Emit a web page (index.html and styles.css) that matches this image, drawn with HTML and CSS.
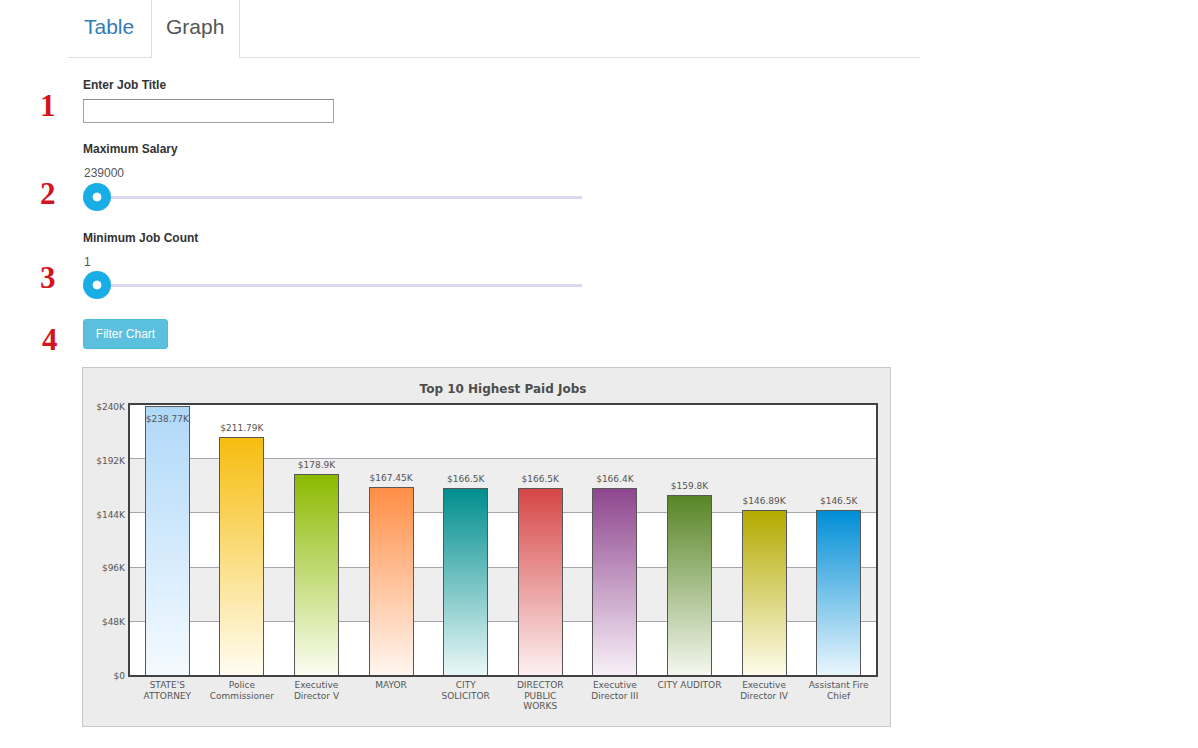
FILE: index.html
```html
<!DOCTYPE html>
<html lang="en">
<head>
<meta charset="utf-8">
<title>Top 10 Highest Paid Jobs</title>
<link rel="stylesheet" href="styles.css">
</head>
<body>
<div class="page">
  <ul class="tabs">
    <li class="tab"><a class="tab-link">Table</a></li>
    <li class="tab active"><a class="tab-link">Graph</a></li>
  </ul>

  <div class="form">
    <div class="field-label lbl-1">Enter Job Title</div>
    <div class="ctl-row row-input">
      <span class="num n1">1</span>
      <input class="text-input" type="text">
    </div>

    <div class="field-label lbl-2">Maximum Salary</div>
    <div class="field-value">239000</div>
    <div class="ctl-row row-slider-1">
      <span class="num n2">2</span>
      <input class="range" type="range" min="239000" max="500000" value="239000">
    </div>

    <div class="field-label lbl-3">Minimum Job Count</div>
    <div class="field-value">1</div>
    <div class="ctl-row row-slider-2">
      <span class="num n3">3</span>
      <input class="range" type="range" min="1" max="100" value="1">
    </div>

    <div class="ctl-row row-button">
      <span class="num n4">4</span>
      <button class="btn" type="button">Filter Chart</button>
    </div>
  </div>

  <div class="chart">
    <div class="chart-title">Top 10 Highest Paid Jobs</div>
    <div class="chart-body">
      <div class="yaxis">
        <span>$240K</span>
        <span>$192K</span>
        <span>$144K</span>
        <span>$96K</span>
        <span>$48K</span>
        <span>$0</span>
      </div>
      <div class="plot">
        <div class="bands">
          <div class="band"></div>
          <div class="band alt"></div>
          <div class="band"></div>
          <div class="band alt"></div>
          <div class="band"></div>
        </div>
        <div class="bars">
          <div class="slot"><div class="bar c1" style="height:99.49%"><span class="val inside">$238.77K</span></div></div>
          <div class="slot"><span class="val">$211.79K</span><div class="bar c2" style="height:88.25%"></div></div>
          <div class="slot"><span class="val">$178.9K</span><div class="bar c3" style="height:74.54%"></div></div>
          <div class="slot"><span class="val">$167.45K</span><div class="bar c4" style="height:69.77%"></div></div>
          <div class="slot"><span class="val">$166.5K</span><div class="bar c5" style="height:69.38%"></div></div>
          <div class="slot"><span class="val">$166.5K</span><div class="bar c6" style="height:69.38%"></div></div>
          <div class="slot"><span class="val">$166.4K</span><div class="bar c7" style="height:69.33%"></div></div>
          <div class="slot"><span class="val">$159.8K</span><div class="bar c8" style="height:66.58%"></div></div>
          <div class="slot"><span class="val">$146.89K</span><div class="bar c9" style="height:61.20%"></div></div>
          <div class="slot"><span class="val">$146.5K</span><div class="bar c10" style="height:61.04%"></div></div>
        </div>
      </div>
    </div>
    <div class="xaxis">
      <span class="xlabel">STATE'S<br>ATTORNEY</span>
      <span class="xlabel">Police<br>Commissioner</span>
      <span class="xlabel">Executive<br>Director V</span>
      <span class="xlabel">MAYOR</span>
      <span class="xlabel">CITY<br>SOLICITOR</span>
      <span class="xlabel">DIRECTOR<br>PUBLIC<br>WORKS</span>
      <span class="xlabel">Executive<br>Director III</span>
      <span class="xlabel">CITY AUDITOR</span>
      <span class="xlabel">Executive<br>Director IV</span>
      <span class="xlabel">Assistant Fire<br>Chief</span>
    </div>
  </div>
</div>
</body>
</html>
```

FILE: styles.css
```css
* { box-sizing: border-box; }

html, body {
  margin: 0;
  padding: 0;
  background: #ffffff;
}

body {
  font-family: "Liberation Sans", Arial, Helvetica, sans-serif;
  color: #333333;
}

.page {
  width: 1198px;
}

/* ---------- Tabs ---------- */
.tabs {
  display: flex;
  list-style: none;
  margin: 0 0 0 68px;
  padding: 0;
  width: 852px;
  height: 58px;
  border-bottom: 1px solid #dddddd;
}

.tab {
  height: 58px;
}

.tab-link {
  display: block;
  width: 83px;
  height: 57px;
  padding: 16px 0 0 16px;
  font-size: 21px;
  line-height: 22px;
  white-space: nowrap;
  color: #337ab7;
}

.tab.active .tab-link {
  width: 89px;
  height: 58px;
  padding: 16px 0 0 14px;
  color: #555555;
  background: #ffffff;
  border-left: 1px solid #dddddd;
  border-right: 1px solid #dddddd;
}

/* ---------- Form ---------- */
.form {
  display: flex;
  flex-direction: column;
  align-items: flex-start;
  padding-left: 40px;
}

.field-label {
  margin-left: 43px;
  font-size: 12px;
  line-height: 16px;
  font-weight: bold;
  color: #333333;
}

.lbl-1 { margin-top: 19px; }
.lbl-2 { margin-top: 18px; }
.lbl-3 { margin-top: 19px; }

.field-value {
  margin-left: 44px;
  margin-top: 8px;
  font-size: 12px;
  line-height: 16px;
  color: #555555;
}

.ctl-row {
  display: flex;
  align-items: center;
}

.row-input { margin-top: 6px; }
.row-slider-1 { margin-top: 2px; }
.row-slider-2 { margin-top: 1px; }
.row-button { margin-top: 20px; }

.num {
  width: 43px;
  font-family: "Liberation Serif", "Times New Roman", serif;
  font-weight: bold;
  font-size: 31px;
  line-height: 10px;
  color: #d3141d;
}

.n1 { margin-bottom: 10px; }
.n2 { margin-bottom: 6px; }
.n3 { margin-bottom: 14px; }
.n4 { margin-top: 12px; padding-left: 2px; }

.text-input {
  width: 251px;
  height: 24px;
  margin: 0;
  padding: 2px 4px;
  border: 1px solid #a3a3a3;
  border-top-color: #8e8e8e;
  background: #ffffff;
  font-family: "Liberation Sans", Arial, sans-serif;
  font-size: 12px;
}

.range {
  -webkit-appearance: none;
  appearance: none;
  width: 499px;
  height: 28px;
  margin: 0;
  padding: 0;
  background: transparent;
}

.range::-webkit-slider-runnable-track {
  height: 3px;
  background: #dcd8ee;
  border: none;
}

.range::-webkit-slider-thumb {
  -webkit-appearance: none;
  appearance: none;
  width: 28px;
  height: 28px;
  margin-top: -12.5px;
  border: none;
  border-radius: 50%;
  background: radial-gradient(circle, #ffffff 0, #ffffff 4px, #19ade6 4.8px);
}

.btn {
  width: 85px;
  height: 30px;
  margin: 0;
  padding: 0;
  border: 1px solid #4fb9da;
  border-radius: 3px;
  background: #5bc0de;
  color: #ffffff;
  font-family: "Liberation Sans", Arial, sans-serif;
  font-size: 12px;
  line-height: 28px;
}

/* ---------- Chart ---------- */
.chart {
  margin: 18px 0 0 82px;
  width: 809px;
  height: 360px;
  border: 1px solid #c8c8c8;
  background: #ececec;
  font-family: "DejaVu Sans", Verdana, sans-serif;
  color: #555555;
}

.chart-title {
  margin-left: 47px;
  width: 746px;
  padding-top: 14px;
  font-size: 12px;
  line-height: 14px;
  font-weight: bold;
  text-align: center;
  color: #4d4d4d;
}

.chart-body {
  display: flex;
  margin-top: 7px;
}

.yaxis {
  width: 45px;
  margin: -2px 0 -5px 0;
  padding-right: 3px;
  display: flex;
  flex-direction: column;
  justify-content: space-between;
  text-align: right;
  font-size: 9px;
  line-height: 12px;
}

.plot {
  width: 750px;
  height: 274px;
  border: 2px solid #414141;
  display: grid;
  background: #ffffff;
}

.bands,
.bars {
  grid-area: 1 / 1;
  height: 270px;
}

.bands {
  display: flex;
  flex-direction: column;
}

.band {
  flex: 1;
  background: #ffffff;
}

.band + .band {
  border-top: 1px solid #a9a5b0;
}

.band.alt {
  background: #eeeeee;
}

.bars {
  display: flex;
}

.slot {
  flex: 1;
  display: flex;
  flex-direction: column;
  align-items: center;
  justify-content: flex-end;
}

.val {
  font-size: 9px;
  line-height: 11px;
  margin-bottom: 3px;
  white-space: nowrap;
  color: #555555;
}

.val.inside {
  display: block;
  margin: 7px 0 0 0;
  text-align: center;
}

.bar {
  width: 45px;
  border: 1px solid #575757;
  border-bottom: none;
}

.c1  { background: linear-gradient(#afd8f8, #f4faff); }
.c2  { background: linear-gradient(#f6bd0f, #fffdf2); }
.c3  { background: linear-gradient(#8bba00, #fbfdf2); }
.c4  { background: linear-gradient(#ff8e46, #fff6f0); }
.c5  { background: linear-gradient(#008e8e, #eaf7f7); }
.c6  { background: linear-gradient(#d64646, #fdf1f1); }
.c7  { background: linear-gradient(#8e468e, #f8f0f8); }
.c8  { background: linear-gradient(#588526, #f4f7ef); }
.c9  { background: linear-gradient(#b3aa00, #fefcea); }
.c10 { background: linear-gradient(#008ed6, #eaf6fd); }

.xaxis {
  display: flex;
  margin-left: 47px;
  width: 746px;
  padding-top: 3px;
}

.xlabel {
  flex: 1;
  text-align: center;
  white-space: nowrap;
  font-size: 9px;
  line-height: 10.5px;
  color: #555555;
}
```
